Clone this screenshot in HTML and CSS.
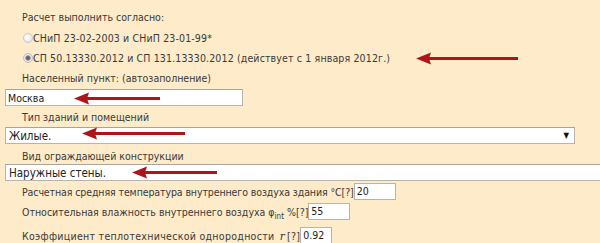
FILE: index.html
```html
<!DOCTYPE html>
<html lang="ru">
<head>
<meta charset="utf-8">
<link rel="stylesheet" href="styles.css">
</head>
<body>
<div class="page">
  <div class="form">
    <div class="label l1">Расчет выполнить согласно:</div>
    <label class="radio r1"><span class="dot"></span><span class="rt">СНиП 23-02-2003 и СНиП 23-01-99*</span></label>
    <label class="radio r2"><span class="dot checked"></span><span class="rt">СП 50.13330.2012 и СП 131.13330.2012 (действует с 1 января 2012г.)</span></label>
    <div class="label l4">Населенный пункт: (автозаполнение)</div>
    <div class="field f-city">Москва</div>
    <div class="label l6">Тип зданий и помещений</div>
    <div class="field f-select"><span>Жилые.</span><span class="caret">▼</span></div>
    <div class="label l8">Вид ограждающей конструкции</div>
    <div class="field f-wall">Наружные стены.</div>
    <div class="row r10"><span>Расчетная средняя температура внутреннего воздуха здания °C[?]</span><span class="small w-temp">20</span></div>
    <div class="row r11"><span>Относительная влажность внутреннего воздуха φ<sub>int</sub> %[?]</span><span class="small w-hum">55</span></div>
    <div class="row r12"><span>Коэффициент теплотехнической однородности <i class="ri">r</i>[?]</span><span class="small w-coef">0.92</span></div>
  </div>
  <svg class="arrows" width="600" height="243" viewBox="0 0 600 243">
    <g fill="#ad1519" stroke="#ad1519">
      <line x1="428" y1="58.5" x2="518" y2="58.5" stroke-width="3"/>
      <polygon points="416,58.5 431,52.5 429,58.5 431,64.5" stroke="none"/>
      <line x1="86" y1="98.5" x2="160" y2="98.5" stroke-width="3"/>
      <polygon points="74,98.5 89,92.5 87,98.5 89,104.5" stroke="none"/>
      <line x1="94" y1="133.5" x2="185" y2="133.5" stroke-width="3"/>
      <polygon points="82,133.5 97,127.5 95,133.5 97,139.5" stroke="none"/>
      <line x1="144" y1="172.5" x2="217" y2="172.5" stroke-width="3"/>
      <polygon points="132,172.5 147,166.5 145,172.5 147,178.5" stroke="none"/>
    </g>
  </svg>
</div>
</body>
</html>
```

FILE: styles.css
```css
html, body {
  margin: 0;
  padding: 0;
  background: #fdebc9;
}
.page {
  position: relative;
  width: 600px;
  height: 243px;
  overflow: hidden;
  font-family: "DejaVu Sans Condensed", "DejaVu Sans", Verdana, sans-serif;
  font-size: 10.5px;
  color: #3a3a3a;
}
.form {
  display: flex;
  flex-direction: column;
}
.label {
  padding-left: 22px;
  height: 16px;
  line-height: 16px;
}
.l1 { margin-top: 9px; }
.l4 { margin-top: 4px; }
.l6 { margin-top: 3px; }
.l8 { margin-top: 4px; }
.radio {
  display: flex;
  align-items: center;
  padding-left: 23px;
  height: 16px;
  line-height: 16px;
}
.rt { letter-spacing: 0.14px; }
.r1 { margin-top: 5px; }
.r2 { margin-top: 4px; }
.dot {
  width: 8px;
  height: 8px;
  border-radius: 50%;
  border: 1px solid #c9c9c9;
  background: radial-gradient(circle at 40% 40%, #ffffff, #dedede);
  flex: none;
}
.dot.checked {
  background: radial-gradient(circle, #555 0, #777 2px, #e2e2e2 3px, #f4f4f4 5px);
  border-color: #bdbdbd;
}
.field {
  margin-left: 5px;
  box-sizing: border-box;
  background: #fff;
  border: 1px solid #b9b4ab;
  border-top-color: #a9a39a;
  display: flex;
  align-items: center;
  padding-left: 2px;
  color: #222;
}
.f-city {
  margin-top: 3px;
  width: 238px;
  height: 17px;
  font-size: 10.5px;
}
.f-select {
  margin-top: 2px;
  width: 570px;
  height: 17px;
  justify-content: space-between;
  font-size: 11.5px;
  padding-left: 3px;
}
.caret {
  font-size: 8px;
  color: #111;
  margin-right: 5px;
}
.f-wall {
  margin-top: 0;
  width: 610px;
  height: 17px;
  font-size: 11.5px;
  padding-left: 3px;
}
.row {
  display: flex;
  align-items: center;
  padding-left: 22px;
  height: 17px;
}
.r10 { margin-top: 2px; letter-spacing: -0.1px; }
.r11 { margin-top: 3px; }
.r12 { margin-top: 7px; letter-spacing: 0.3px; }
.row sub {
  font-size: 8px;
  vertical-align: -3px;
  line-height: 0;
}
.ri {
  font-family: "DejaVu Serif", serif;
  padding: 0 2px;
}
.small {
  box-sizing: border-box;
  height: 17px;
  background: #fff;
  border: 1px solid #b9b4ab;
  padding-left: 2px;
  line-height: 15px;
  color: #222;
  font-size: 10.5px;
  letter-spacing: 0;
}
.w-temp { width: 42px; }
.w-hum { width: 42px; }
.w-coef { width: 32px; }
.arrows {
  position: absolute;
  left: 0;
  top: 0;
}
```
